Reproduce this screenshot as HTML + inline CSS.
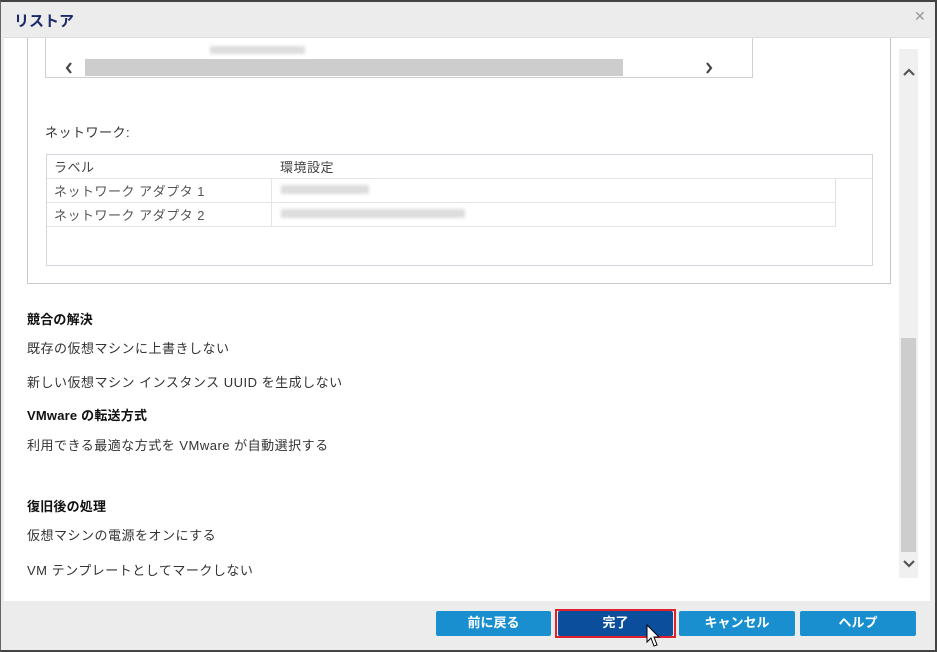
<!DOCTYPE html>
<html><head><meta charset="utf-8"><style>
*{margin:0;padding:0;box-sizing:border-box}
body{width:937px;height:652px;overflow:hidden;background:#ececec;font-family:"Liberation Sans","Noto Sans CJK JP",sans-serif;font-size:13px;color:#333;position:relative}
.a{position:absolute}
.frame{left:0;top:0;width:937px;height:652px;border:2px solid #444;border-left:1px solid #666}
.title{left:14px;top:10px;font-size:15px;color:#1c2a6b;font-weight:bold}
.close{left:914px;top:8px;font-size:14px;color:#999}
.content{left:4px;top:37px;width:926px;height:564px;background:#fff;border-top:1px solid #ddd}
.t{left:27px;font-size:13px;color:#333;letter-spacing:0.5px}
.b{font-weight:bold;color:#111;letter-spacing:0.2px}
.btn{top:611px;height:25px;background:#1a8fd0;color:#fff;font-weight:bold;font-size:13px;text-align:center;line-height:24px;border-radius:2px}
.blur{background:#ddd;filter:blur(1.5px)}
</style></head><body>
<div class="a title">リストア</div>
<div class="a close">✕</div>
<div class="a content"></div>
<div class="a" style="left:27px;top:38px;width:864px;height:246px;border:1px solid #c8c8c8;border-top:none"></div>
<div class="a" style="left:45px;top:38px;width:708px;height:40px;border:1px solid #d0d0d0;border-top:none"></div>
<div class="a blur" style="left:210px;top:46px;width:95px;height:8px"></div>
<div class="a" style="left:85px;top:59px;width:538px;height:17px;background:#cdcdcd"></div>
<svg class="a" style="left:64px;top:61px" width="10" height="14"><path d="M7 2 L3 7 L7 12" stroke="#444" stroke-width="2.2" fill="none"/></svg>
<svg class="a" style="left:704px;top:61px" width="10" height="14"><path d="M3 2 L7 7 L3 12" stroke="#444" stroke-width="2.2" fill="none"/></svg>
<div class="a t" style="left:45px;top:122px">ネットワーク:</div>
<div class="a" style="left:46px;top:154px;width:827px;height:112px;border:1px solid #d3d6dc"></div>
<div class="a" style="left:47px;top:178px;width:789px;height:48px;border-right:1px solid #e0e0e0"></div>
<div class="a" style="left:47px;top:178px;width:826px;border-top:1px solid #e4e4e4"></div>
<div class="a" style="left:47px;top:202px;width:789px;border-top:1px solid #e4e4e4"></div>
<div class="a" style="left:47px;top:226px;width:789px;border-top:1px solid #e4e4e4"></div>
<div class="a" style="left:271px;top:178px;height:48px;border-left:1px solid #e4e4e4"></div>
<div class="a t" style="left:54px;top:157px;color:#444">ラベル</div>
<div class="a t" style="left:280px;top:157px;color:#444">環境設定</div>
<div class="a t" style="left:54px;top:181px;color:#555">ネットワーク アダプタ 1</div>
<div class="a t" style="left:54px;top:205px;color:#555">ネットワーク アダプタ 2</div>
<div class="a blur" style="left:281px;top:185px;width:88px;height:9px"></div>
<div class="a blur" style="left:281px;top:209px;width:184px;height:9px"></div>
<div class="a" style="left:899px;top:49px;width:19px;height:529px;background:#f0f0f0"></div>
<div class="a" style="left:901px;top:338px;width:15px;height:214px;background:#cdcdcd"></div>
<svg class="a" style="left:902px;top:66px" width="14" height="12"><path d="M2 9 L7 4 L12 9" stroke="#555" stroke-width="2.2" fill="none"/></svg>
<svg class="a" style="left:902px;top:558px" width="14" height="12"><path d="M2 3 L7 8 L12 3" stroke="#555" stroke-width="2.2" fill="none"/></svg>
<div class="a t b" style="top:309px">競合の解決</div>
<div class="a t" style="top:338px">既存の仮想マシンに上書きしない</div>
<div class="a t" style="top:372px">新しい仮想マシン インスタンス UUID を生成しない</div>
<div class="a t b" style="top:405px">VMware の転送方式</div>
<div class="a t" style="top:435px">利用できる最適な方式を VMware が自動選択する</div>
<div class="a t b" style="top:496px">復旧後の処理</div>
<div class="a t" style="top:525px">仮想マシンの電源をオンにする</div>
<div class="a t" style="top:560px">VM テンプレートとしてマークしない</div>
<div class="a btn" style="left:436px;width:115px">前に戻る</div>
<div class="a" style="left:555px;top:609px;width:121px;height:29px;border:2px solid #e0202a"></div>
<div class="a btn" style="left:558px;width:115px;background:#0b4f9c">完了</div>
<div class="a btn" style="left:679px;width:116px">キャンセル</div>
<div class="a btn" style="left:800px;width:116px">ヘルプ</div>
<svg class="a" style="left:646px;top:624px" width="16" height="26"><path d="M1 1 L1 18 L5 14 L8 22 L11 21 L8 13 L13 13 Z" fill="#fff" stroke="#000" stroke-width="1"/></svg>
<div class="a frame"></div>
</body></html>
